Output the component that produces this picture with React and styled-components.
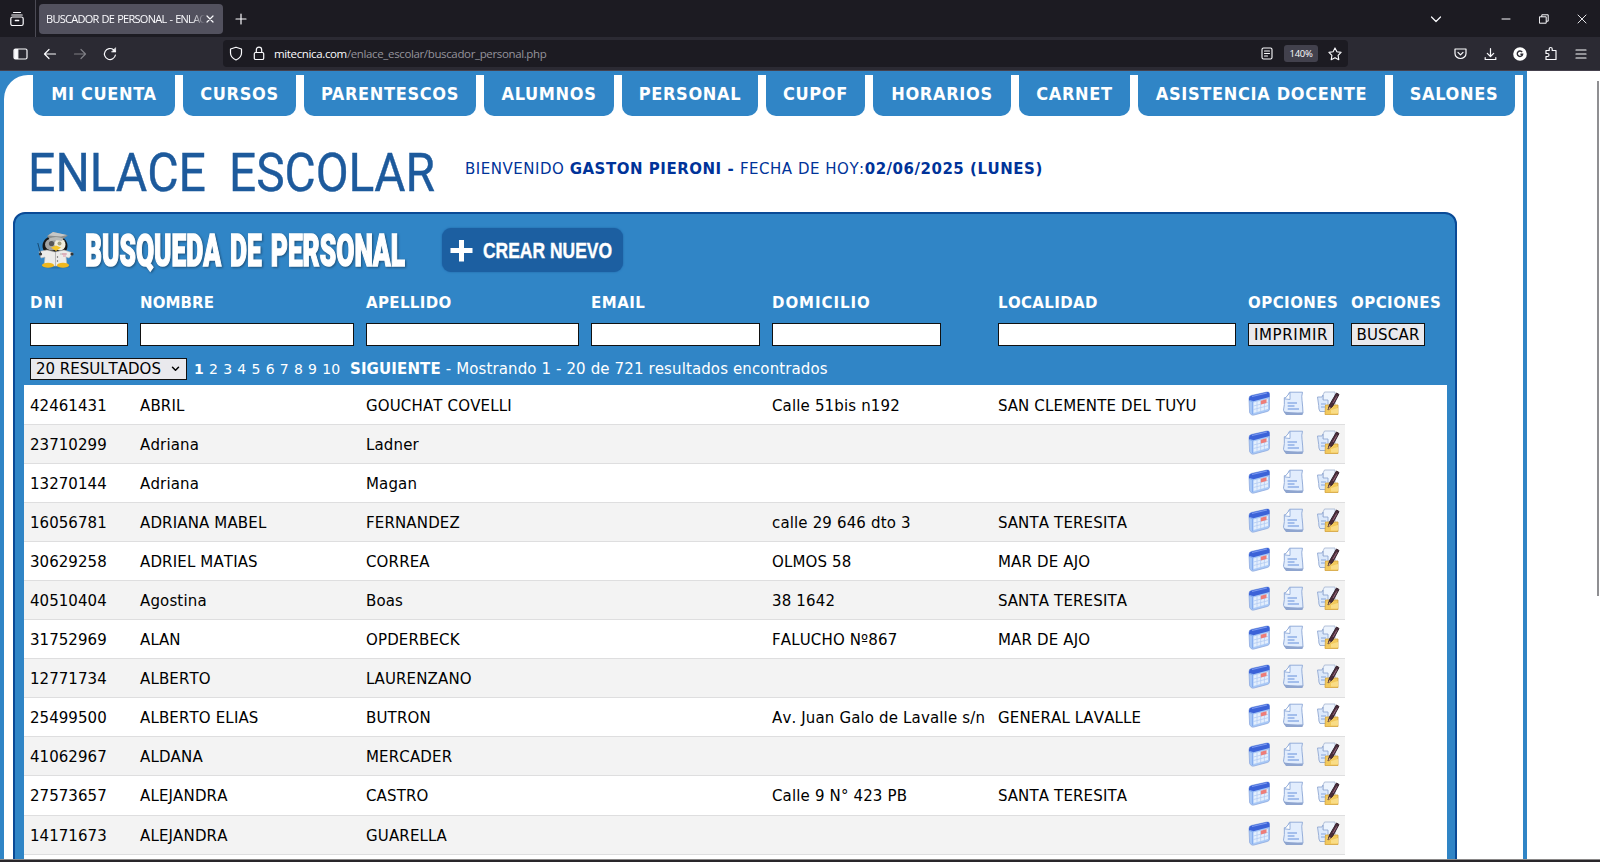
import React from "react";
import styled, { createGlobalStyle } from "styled-components";

const BLUE = "#3085c6";
const NAVY = "#0a4a96";
const VERDANA = `"DejaVu Sans", Verdana, sans-serif`;
const COLUMNS = "110px 226px 225px 181px 226px 250px 103px 96px";

const GlobalStyle = createGlobalStyle`
  * { box-sizing: border-box; }
  body { margin: 0; background: #fff; overflow: hidden; }
`;

const Window = styled.div`
  width: 1600px;
  height: 862px;
  display: flex;
  flex-direction: column;
  overflow: hidden;
  font-family: ${VERDANA};
  font-kerning: none;
`;

/* ---------- Browser chrome ---------- */
const TabStrip = styled.div`
  height: 37px;
  flex: none;
  display: flex;
  align-items: center;
  background: #1c1b22;
  color: #fbfbfe;
`;

const RecentTabs = styled.div`
  width: 36px;
  height: 37px;
  padding-left: 9px;
  display: flex;
  align-items: center;
  border-right: 1px solid #4c4b55;
`;

const BrowserTab = styled.div`
  width: 184px;
  height: 30px;
  margin: 0 12px 0 3px;
  padding: 0 9px 0 7px;
  display: flex;
  align-items: center;
  justify-content: space-between;
  border-radius: 4px;
  background: #52515e;
`;

const BrowserTabTitle = styled.span`
  width: 159px;
  overflow: hidden;
  white-space: nowrap;
  font: 11px "Open Sans", sans-serif;
  letter-spacing: -0.72px;
  word-spacing: 0.8px;
  mask-image: linear-gradient(to right, #000 92%, transparent 100%);
`;

const WindowControls = styled.div`
  margin-left: auto;
  display: flex;
  align-items: center;
  padding-right: 13px;
`;

const Slot = styled.span`
  display: flex;
  justify-content: center;
  flex: none;
  width: ${(p) => p.$w}px;
`;

const Toolbar = styled.div`
  height: 34px;
  flex: none;
  display: flex;
  align-items: center;
  background: #2b2a33;
  border-bottom: 1px solid #45414d;
  color: #fbfbfe;
`;

const ToolbarGroup = styled.div`
  width: ${(p) => p.$w}px;
  padding-left: ${(p) => p.$left || 0}px;
  display: flex;
  align-items: center;
`;

const AddressBar = styled.div`
  width: 1125px;
  height: 27px;
  padding-left: 1px;
  display: flex;
  align-items: center;
  border-radius: 4px;
  background: #1c1b22;
`;

const Address = styled.span`
  flex: 1;
  padding-left: 4px;
  font: 11.5px "Open Sans", sans-serif;
  letter-spacing: -0.36px;
  color: #94939c;
  b { font-weight: 400; color: #fbfbfe; }
`;

const ZoomBadge = styled.span`
  width: 34px;
  height: 17px;
  margin-right: 4px;
  border-radius: 3px;
  background: #42414d;
  font: 9.5px/17px "Open Sans", sans-serif;
  text-align: center;
  letter-spacing: -0.3px;
`;

/* ---------- Page ---------- */
const Viewport = styled.main`
  flex: 1;
  min-height: 0;
  display: flex;
  justify-content: space-between;
  overflow: hidden;
  background: #fff;
`;

const Frame = styled.div`
  width: 1527px;
  height: 1000px;
  padding: 4px 4px 0;
  background: ${BLUE};
`;

const Sheet = styled.div`
  height: 100%;
  background: #fff;
  border-top-left-radius: 24px;
`;

const ScrollThumb = styled.div`
  width: 2px;
  height: 515px;
  margin: 10px 1px 0 0;
  background: #8f8f92;
`;

const Nav = styled.nav`
  height: 41px;
  padding-left: 29px;
  display: flex;
  gap: 8px;
`;

const NavTab = styled.a`
  width: ${(p) => p.$w}px;
  flex: none;
  display: flex;
  align-items: center;
  justify-content: center;
  padding-bottom: 5px;
  border-radius: 0 0 10px 10px;
  background: ${BLUE};
  color: #fff;
  font: bold 18px "DejaVu Sans Condensed", "DejaVu Sans", sans-serif;
  font-stretch: condensed;
  letter-spacing: 0.66px;
  white-space: nowrap;
`;

const Header = styled.header`
  height: 96px;
  display: flex;
  align-items: center;
  padding: 11px 0 0 27px;
`;

const Welcome = styled.div`
  padding: 0 0 1px 24px;
  margin-top: -1px;
  color: #003399;
  font-size: 15px;
  letter-spacing: 0.52px;
  white-space: nowrap;
`;

const Panel = styled.section`
  width: 1444px;
  height: 900px;
  margin-left: 9px;
  padding: 0 8px 0 9px;
  border: 2px solid ${NAVY};
  border-radius: 12px 12px 0 0;
  background: ${BLUE};
`;

const TitleRow = styled.div`
  height: 74px;
  padding: 0 0 3px 13px;
  display: flex;
  align-items: center;
`;

const CreateButton = styled.button`
  width: 181px;
  height: 44px;
  margin-left: 32px;
  padding: 0;
  border: 0;
  border-radius: 9px;
  background: #1c5fa1;
  display: flex;
  box-shadow: 0 0 2px #1c5fa1;
`;

const GridRow = styled.div`
  height: ${(p) => p.$h}px;
  padding-left: 6px;
  display: grid;
  grid-template-columns: ${COLUMNS};
  align-items: center;
`;

const ColumnTitle = styled.span`
  color: #fff;
  font-weight: bold;
  font-size: 15px;
  letter-spacing: ${(p) => p.$ls}px;
`;

const Filter = styled.input`
  width: ${(p) => p.$w}px;
  height: 23px;
  border: 1px solid #111;
  border-radius: 0;
  background: #fff;
`;

const Button = styled.button`
  width: ${(p) => p.$w}px;
  height: 23px;
  padding: 0;
  border: 1px solid #111;
  border-radius: 0;
  background: #e9e9ed;
  color: #000;
  font: 15px ${VERDANA};
  line-height: 20px;
  letter-spacing: ${(p) => p.$ls}px;
`;

const Pager = styled.div`
  height: 34px;
  padding: 1px 0 0 6px;
  display: flex;
  align-items: center;
  color: #fff;
  font-size: 15px;
  letter-spacing: 0.12px;
  white-space: nowrap;
`;

const PageSize = styled.div`
  width: 157px;
  height: 22px;
  margin-right: 7px;
  padding: 0 6px 0 5px;
  display: flex;
  align-items: center;
  justify-content: space-between;
  border: 1px solid #111;
  background: #e9e9ed;
  color: #000;
  letter-spacing: 0;
`;

const Pages = styled.span`
  width: 156px;
  padding-top: 1px;
  font-size: 14px;
  letter-spacing: 0;
  word-spacing: 0.8px;
`;

const Results = styled.div`
  height: 800px;
  padding-top: 1px;
  background: #fff;
`;

const ResultRow = styled.div`
  width: 1321px;
  height: 39.06px;
  padding-left: 6px;
  display: grid;
  grid-template-columns: 110px 226px 225px 181px 226px 250px 1fr;
  border-bottom: 1px solid #dededf;
  background: ${(p) => (p.$shaded ? "#f3f3f3" : "#fff")};
`;

const Cell = styled.span`
  color: #000;
  font-size: 15px;
  line-height: 40px;
  letter-spacing: ${(p) => (p.$numeric ? 0.05 : 0.15)}px;
  white-space: nowrap;
`;

const Actions = styled.span`
  padding-top: 5px;
  display: flex;
  gap: 11px;
  svg { flex: none; }
`;

const Taskbar = styled.footer`
  height: 3px;
  flex: none;
  background: #29262a;
  border-top: 1px solid #8a8888;
`;

/* ---------- Icons ---------- */
const Line = ({ w = 16, h = 16, vb = "0 0 16 16", sw = 1.2, children, ...rest }) => (
  <svg width={w} height={h} viewBox={vb} fill="none" stroke="currentColor" strokeWidth={sw} strokeLinecap="round" strokeLinejoin="round" {...rest}>
    {children}
  </svg>
);

const Penguin = () => (
  <svg width="38" height="38" viewBox="0 0 38 38">
    <ellipse cx="19" cy="35.5" rx="14" ry="2" fill="#23689c" opacity=".6" />
    <ellipse cx="18" cy="15" rx="12.5" ry="10.500" fill="#171817" />
    <ellipse cx="15" cy="13.500" rx="7" ry="6" fill="#a3a4a3" />
    <ellipse cx="23" cy="13.500" rx="5.5" ry="6" fill="#f0eddc" />
    <circle cx="14.500" cy="12.500" r="2.600" fill="#555" />
    <circle cx="22.500" cy="12.500" r="2" fill="#a3a284" />
    <path d="M14 16.500 19 14.500l5 2-5 3.500Z" fill="#f4c62b" />
    <path d="M10 5 16 1l15 3.500-6 4H13Z" fill="#8c8f8e" />
    <path d="M11 4.500 16 1l14 3-6 1.500Z" fill="#c6c8c7" />
    <path d="M12 7.500q7-3 14 0l-1 2.500q-6-1.500-12 0Z" fill="#b9bcba" />
    <path d="M2 20.500 10 19l8 2 9-2 9 3-4 5-3-1 1 9H7l1-9-4 1Z" fill="#ececea" stroke="#b7b7b5" strokeWidth=".6" />
    <path d="M18.500 21v14M23 23h6" stroke="#aaa" strokeWidth=".8" />
    <path d="M25 23h5M26 25h3" stroke="#e58aa0" strokeWidth=".9" />
    <circle cx="20.500" cy="26" r=".7" fill="#555" />
    <circle cx="20.500" cy="30" r=".7" fill="#555" />
    <ellipse cx="11" cy="34.300" rx="6" ry="2.500" fill="#f0b81e" />
    <ellipse cx="26" cy="34.300" rx="6" ry="2.500" fill="#f0b81e" />
    <path d="M.8 12 4 24" stroke="#174a72" strokeWidth="1" />
    <circle cx="3.500" cy="23" r="1.600" fill="#333" />
    <circle cx="35" cy="23" r="1.600" fill="#333" />
  </svg>
);

const CalendarIcon = () => (
  <svg width="23" height="25" viewBox="0 0 23 25">
    <path d="M1 7.500Q1 5 3.500 4.400L19 1q2.500-.4 2.500 2v15q0 1.800-2 2.400L6 24q-2 .5-3.200-.7L1.600 21.500Z" fill="#a9c9f6" stroke="#8fabe0" strokeWidth=".8" />
    <path d="M1 7.500Q1 5 3.500 4.400L19 1q2.500-.4 2.500 2v3L4.500 10.500 1 9.500Z" fill="#3c63d8" />
    <path d="M4 5.500 19 2" stroke="#7c9af0" strokeWidth="1.200" />
    <path d="M5.500 11.500 20 8v10L5.500 22Z" fill="#e4effd" />
    <path d="M5.500 15 20 11.300M5.500 18.500 20 14.700M9 10.800v10M12.700 10v10M16.400 9v10" stroke="#b3cbf2" strokeWidth=".8" />
    <path d="M12.800 9.700 18.500 8.300v3.700L12.800 13.400Z" fill="#ee7d78" />
    <path d="M1.500 9.700 4.500 10.500V23" stroke="#87aef0" strokeWidth="1.200" fill="none" />
  </svg>
);

const DocumentIcon = () => (
  <svg width="23" height="25" viewBox="0 0 23 25">
    <path d="M7.500 1.200H20.500q-1.200 4-.5 8 .8 7 1 13H3.500q-1-1-2-3 1.300-5 .8-12.500H5Z" fill="#e2edfd" stroke="#94add9" strokeWidth="1" />
    <path d="M8 1.500v7L2.600 7.900Z" fill="#fff" stroke="#8faad9" strokeWidth=".9" />
    <path d="M5.500 12H15M5.700 15H12.500M5.700 18H17" stroke="#8eaee6" strokeWidth="1.300" />
    <path d="M1.500 20.500q9 1.500 19.500 1L20.500 24H4Z" fill="#8fa5cf" />
  </svg>
);

const EditIcon = () => (
  <svg width="24" height="25" viewBox="0 0 24 25">
    <path d="M8.500 1H19v14H7V4Z" fill="#edf4fd" stroke="#a2b3cf" strokeWidth=".8" />
    <path d="M1.500 6H6l1-2v5h5v11.500H4q-1.500-2-1.300-6Z" fill="#dce9fb" stroke="#91a8d3" strokeWidth=".9" />
    <path d="M5 13h5M5 16h4" stroke="#86a5da" strokeWidth="1" />
    <path d="M9.500 14H22v9.500H9Z" fill="#f2c95c" stroke="#d3a23c" strokeWidth=".8" />
    <path d="M15 19 22 17v5.500h-7Z" fill="#f9dc86" />
    <path d="M23 3.500 20.500 2 13.500 14l-1.500 5 4.500-3.500Z" fill="#4a2d3b" stroke="#35222d" strokeWidth="1" />
    <path d="M20.800 5.500 17 12" stroke="#96647b" strokeWidth="1" />
    <path d="m12 19 1.300-3 1.700 1Z" fill="#e3b27a" />
  </svg>
);

const NAV = [
  ["MI CUENTA", 142], ["CURSOS", 113], ["PARENTESCOS", 172], ["ALUMNOS", 130], ["PERSONAL", 136],
  ["CUPOF", 99], ["HORARIOS", 138], ["CARNET", 111], ["ASISTENCIA DOCENTE", 247], ["SALONES", 122],
];

const TITLES = [
  ["DNI", 1.3], ["NOMBRE", 0.1], ["APELLIDO", 0.35], ["EMAIL", 0.5],
  ["DOMICILIO", 0.95], ["LOCALIDAD", 0.35], ["OPCIONES", 0.45], ["OPCIONES", 0.45],
];

const ROWS = [
  ["42461431", "ABRIL", "GOUCHAT COVELLI", "", "Calle 51bis n192", "SAN CLEMENTE DEL TUYU"],
  ["23710299", "Adriana", "Ladner", "", "", ""],
  ["13270144", "Adriana", "Magan", "", "", ""],
  ["16056781", "ADRIANA MABEL", "FERNANDEZ", "", "calle 29 646 dto 3", "SANTA TERESITA"],
  ["30629258", "ADRIEL MATIAS", "CORREA", "", "OLMOS 58", "MAR DE AJO"],
  ["40510404", "Agostina", "Boas", "", "38 1642", "SANTA TERESITA"],
  ["31752969", "ALAN", "OPDERBECK", "", "FALUCHO Nº867", "MAR DE AJO"],
  ["12771734", "ALBERTO", "LAURENZANO", "", "", ""],
  ["25499500", "ALBERTO ELIAS", "BUTRON", "", "Av. Juan Galo de Lavalle s/n", "GENERAL LAVALLE"],
  ["41062967", "ALDANA", "MERCADER", "", "", ""],
  ["27573657", "ALEJANDRA", "CASTRO", "", "Calle 9 N° 423 PB", "SANTA TERESITA"],
  ["14171673", "ALEJANDRA", "GUARELLA", "", "", ""],
];

export default function App() {
  return (
    <Window>
      <GlobalStyle />
      <TabStrip>
        <RecentTabs>
          <Line><path d="M4.500 1.500h7M2.800 4h10.400" /><rect x="1.800" y="6" width="12.400" height="8.500" rx="1.800" /><path d="M6.500 9.500h3" strokeWidth="1.700" /></Line>
        </RecentTabs>
        <BrowserTab>
          <BrowserTabTitle>BUSCADOR DE PERSONAL - ENLACE</BrowserTabTitle>
          <Line w={8} h={8} vb="0 0 8 8"><path d="m1 1 6 6M7 1 1 7" /></Line>
        </BrowserTab>
        <Line w={12} h={12} vb="0 0 12 12" sw={1.2}><path d="M6 1v10M1 6h10" /></Line>
        <WindowControls>
          <Slot $w={40}><Line w={12} h={12} vb="0 0 12 12"><path d="m1.500 4 4.500 4.500L10.500 4" /></Line></Slot>
          <Slot $w={30} />
          <Slot $w={39}><Line w={10} h={10} vb="0 0 10 10" sw={1}><path d="M1 5h8" /></Line></Slot>
          <Slot $w={38}><Line w={10} h={10} vb="0 0 10 10" sw={1}><path d="M.8 2.800h6.400v6.400H.8ZM2.800 2.500V.8h6.400v6.400H7.500" /></Line></Slot>
          <Slot $w={14} />
          <Line w={10} h={10} vb="0 0 10 10" sw={0.9}><path d="m1 1 8 8M9 1 1 9" /></Line>
        </WindowControls>
      </TabStrip>
      <Toolbar>
        <ToolbarGroup $w={223} $left={5}>
          <Slot $w={30}><Line w={15} h={14} vb="0 0 15 14"><rect x="1" y="2" width="13" height="10" rx="1.500" /><path d="M1.800 2.500h3v9h-3Z" fill="currentColor" /></Line></Slot>
          <Slot $w={30}><Line w={14} h={14} vb="0 0 14 14"><path d="M12.500 7h-11M6 2.500 1.500 7 6 11.500" /></Line></Slot>
          <Slot $w={30}><Line w={14} h={14} vb="0 0 14 14" opacity=".4"><path d="M1.500 7h11M8 2.500 12.500 7 8 11.500" /></Line></Slot>
          <Slot $w={30}><Line w={14} h={14} vb="0 0 14 14"><path d="M12.400 8A5.500 5.500 0 1 1 10.500 2.800L12.300 4.500" /><path d="M12.600 1v4H8.800Z" fill="currentColor" strokeWidth=".6" /></Line></Slot>
        </ToolbarGroup>
        <AddressBar>
          <Slot $w={23}><Line w={14} h={15} vb="0 0 14 15"><path d="M7 1.200 12.500 3v4q0 4.500-5.500 7Q1.500 11.500 1.500 7V3Z" /></Line></Slot>
          <Slot $w={23}><Line w={12} h={15} vb="0 0 12 15"><rect x="1.300" y="6.500" width="9.400" height="7" rx="1.300" /><path d="M3.300 6.500V4Q3.300 1.200 6 1.200T8.700 4v2.500" /></Line></Slot>
          <Address><b>mitecnica.com</b>/enlace_escolar/buscador_personal.php</Address>
          <Slot $w={34}><Line w={12} h={13} vb="0 0 12 13" sw={1.1}><rect x="1" y="1" width="10" height="11" rx="1.500" /><path d="M3.500 4h5M3.500 6.500h5M3.500 9h3" /></Line></Slot>
          <ZoomBadge>140%</ZoomBadge>
          <Slot $w={26}><Line w={14} h={14} vb="0 0 14 14" sw={1.1}><path d="m7 .9 1.900 3.900 4.200.6-3 3 .7 4.300L7 10.700l-3.800 2 .7-4.300-3-3 4.200-.6Z" /></Line></Slot>
        </AddressBar>
        <ToolbarGroup $w={252} $left={97}>
          <Slot $w={30}><Line w={13} h={13} vb="0 0 13 13"><path d="M1 2h11v4.500a5.500 5 0 0 1-11 0Z" /><path d="m4 5.300 2.500 2.500L9 5.300" /></Line></Slot>
          <Slot $w={30}><Line w={13} h={14} vb="0 0 13 14"><path d="M6.500 1.500v7.800M3.300 6.300l3.200 3.200 3.200-3.200M1.200 10.500v2h10.600v-2" /></Line></Slot>
          <Slot $w={30}><svg width="14" height="14" viewBox="0 0 14 14"><circle cx="7" cy="7" r="6.800" fill="#fff" /><path d="M9.200 5.200A2.700 2.700 0 1 0 9.600 7.300H7.400" fill="none" stroke="#2b2a33" strokeWidth="1.400" /></svg></Slot>
          <Slot $w={31}><Line w={14} h={15} vb="0 0 14 15"><path d="M2 4.500h3.200V3q0-1.500 1.500-1.500T8.200 3v1.500H12v9H2V10.500h1.500Q5 10.500 5 9T3.500 7.500H2Z" /></Line></Slot>
          <Slot $w={30}><Line w={12} h={12} vb="0 0 12 12" sw={1.2}><path d="M1 2h10M1 6h10M1 10h10" /></Line></Slot>
        </ToolbarGroup>
      </Toolbar>

      <Viewport>
        <Frame>
          <Sheet>
            <Nav>
              {NAV.map(([label, w]) => <NavTab key={label} $w={w}>{label}</NavTab>)}
            </Nav>
            <Header>
              <svg width="410" height="76" viewBox="0 0 410 76" fill="#1d5a9c" stroke="#1d5a9c" strokeWidth=".4" fontFamily="Roboto, sans-serif" fontSize="54">
                <text x="-3" y="59" textLength="178" lengthAdjust="spacingAndGlyphs">ENLACE</text>
                <text x="198" y="59" textLength="206" lengthAdjust="spacingAndGlyphs">ESCOLAR</text>
              </svg>
              <Welcome>BIENVENIDO <b>GASTON PIERONI - </b>FECHA DE HOY:<b>02/06/2025 (LUNES)</b></Welcome>
            </Header>
            <Panel>
              <TitleRow>
                <Penguin />
                <svg width="335" height="60" viewBox="0 0 335 60" fontFamily="Roboto, sans-serif" fontWeight="900" fontSize="43.500" fill="#fff" stroke="#fff" strokeWidth="1.500" style={{ filter: "drop-shadow(1px 1px 1px #1d4f78)" }}>
                  <text x="10" y="46" textLength="320" wordSpacing="4" lengthAdjust="spacingAndGlyphs">BUSQUEDA DE PERSONAL</text>
                </svg>
                <CreateButton>
                  <svg width="181" height="44" viewBox="0 0 181 44" fill="#fff">
                    <path d="M17 12h5v8h8.500v5H22v8.500h-5V25H8.500v-5H17Z" />
                    <text x="41" y="30" fontFamily="Liberation Sans, sans-serif" fontWeight="700" fontSize="22" stroke="#fff" strokeWidth=".4" textLength="129" lengthAdjust="spacingAndGlyphs">CREAR NUEVO</text>
                  </svg>
                </CreateButton>
              </TitleRow>
              <GridRow $h={30}>
                {TITLES.map(([label, ls], i) => <ColumnTitle key={i} $ls={ls}>{label}</ColumnTitle>)}
              </GridRow>
              <GridRow $h={33}>
                {[98, 214, 213, 169, 169, 238].map((w, i) => <Filter key={i} $w={w} />)}
                <Button $w={86} $ls={0.65}>IMPRIMIR</Button>
                <Button $w={74} $ls={0.2}>BUSCAR</Button>
              </GridRow>
              <Pager>
                <PageSize>20 RESULTADOS<Line w={9} h={8} vb="0 0 9 8" sw={1.5}><path d="m1.500 2.300 3 3 3-3" /></Line></PageSize>
                <Pages><b>1</b> 2 3 4 5 6 7 8 9 10</Pages>
                <span><b>SIGUIENTE</b> - Mostrando 1 - 20 de 721 resultados encontrados</span>
              </Pager>
              <Results>
                {ROWS.map((row, i) => (
                  <ResultRow key={row[0]} $shaded={i % 2 === 1}>
                    {row.map((text, c) => <Cell key={c} $numeric={c === 0}>{text}</Cell>)}
                    <Actions><CalendarIcon /><DocumentIcon /><EditIcon /></Actions>
                  </ResultRow>
                ))}
              </Results>
            </Panel>
          </Sheet>
        </Frame>
        <ScrollThumb />
      </Viewport>
      <Taskbar />
    </Window>
  );
}
